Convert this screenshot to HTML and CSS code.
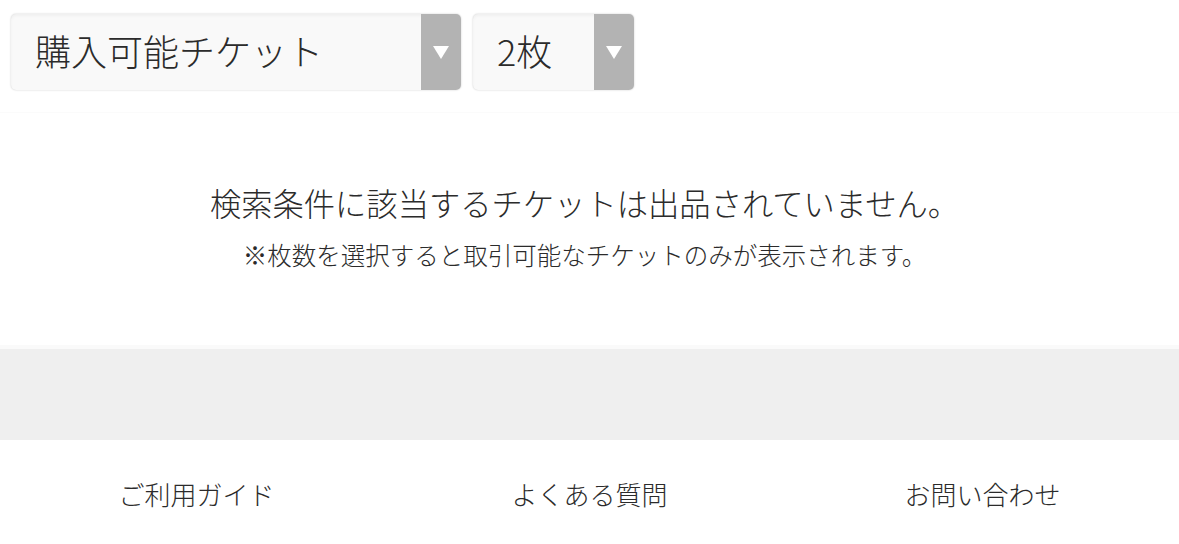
FILE: index.html
```html
<!DOCTYPE html>
<html lang="ja">
<head>
<meta charset="utf-8">
<title>チケット</title>
<link rel="stylesheet" href="styles.css">
</head>
<body>
<div class="filters">
  <div class="select select-wide">
    <span class="select-label">購入可能チケット</span>
    <span class="select-arrow"><svg width="16" height="13" viewBox="0 0 16 13"><polygon points="0,0 16,0 8,13" fill="#fff"/></svg></span>
  </div>
  <div class="select select-narrow">
    <span class="select-label">2枚</span>
    <span class="select-arrow"><svg width="16" height="13" viewBox="0 0 16 13"><polygon points="0,0 16,0 8,13" fill="#fff"/></svg></span>
  </div>
</div>
<div class="message">
  <p class="message-main">検索条件に該当するチケットは出品されていません。</p>
  <p class="message-sub">※枚数を選択すると取引可能なチケットのみが表示されます。</p>
</div>
<div class="band"></div>
<nav class="footer">
  <a class="footer-link" href="#">ご利用ガイド</a>
  <a class="footer-link" href="#">よくある質問</a>
  <a class="footer-link" href="#">お問い合わせ</a>
</nav>
</body>
</html>
```

FILE: styles.css
```css
html, body {
  margin: 0;
  padding: 0;
  background: #fff;
}
body {
  font-family: "Noto Sans CJK JP", "Noto Sans", sans-serif;
  font-weight: 300;
  color: #2b2b2b;
  width: 1179px;
  overflow: hidden;
}
.filters {
  display: flex;
  gap: 12px;
  padding: 14px 0 0 11px;
  height: 76px;
}
.select {
  display: flex;
  height: 76px;
  border-radius: 5px;
  background: #f9f9f9;
  box-shadow: 0 0 2px rgba(0, 0, 0, 0.22), inset 0 2px 3px rgba(0, 0, 0, 0.04);
  overflow: hidden;
}
.select-wide { width: 450px; }
.select-narrow { width: 161px; }
.select-label {
  flex: 1;
  padding-left: 24px;
  font-size: 36px;
  line-height: 72px;
  white-space: nowrap;
}
.select-arrow {
  width: 40px;
  background: #b3b3b3;
  display: flex;
  align-items: center;
  justify-content: center;
}
.select-arrow svg { display: block; margin-top: 1px; }
.message {
  margin-top: 22px;
  border-top: 1px solid #fbfbfb;
  padding: 70px 10px 0 0;
  height: 162px;
  text-align: center;
  border-bottom: 4px solid #fafafa;
}
.message-main {
  margin: 0;
  font-size: 31.3px;
  line-height: 40px;
  white-space: nowrap;
}
.message-sub {
  margin: 16px 0 0;
  font-size: 24.5px;
  line-height: 32px;
  white-space: nowrap;
}
.band {
  height: 91px;
  background: #efefef;
}
.footer {
  display: grid;
  grid-template-columns: repeat(3, 1fr);
  padding-top: 34px;
  height: 70px;
}
.footer-link {
  text-align: center;
  font-size: 26px;
  line-height: 40px;
  color: inherit;
  text-decoration: none;
}
```
